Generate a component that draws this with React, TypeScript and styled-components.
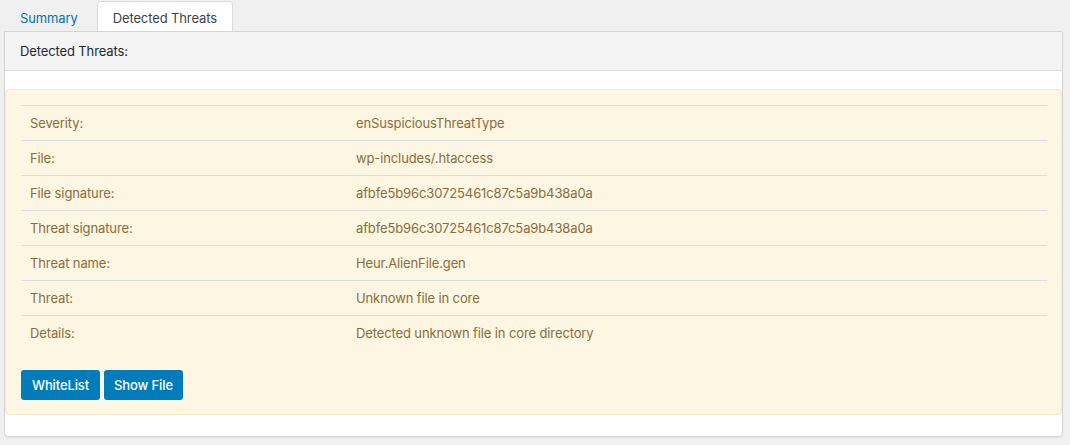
import React from "react";
import styled, { createGlobalStyle } from "styled-components";

const Global = createGlobalStyle`
  html, body { margin: 0; padding: 0; background: #f0f0f0; }
  body { font-family: Inter, "Liberation Sans", Arial, sans-serif; font-size: 13px; letter-spacing: -0.12px; }
`;

const Page = styled.div`
  padding: 1px 7px 8px 4px;
`;

const TabBar = styled.div`
  display: flex;
  align-items: flex-end;
  height: 30px;
  gap: 3px;
`;

const Tab = styled.div<{ $active?: boolean }>`
  height: 30px;
  box-sizing: border-box;
  padding: 3px 15px 0;
  display: flex;
  align-items: center;
  font-size: 13px;
  border: 1px solid ${(p) => (p.$active ? "#dcdcde" : "transparent")};
  border-bottom: none;
  border-radius: 4px 4px 0 0;
  background: ${(p) => (p.$active ? "#fff" : "transparent")};
  color: ${(p) => (p.$active ? "#3c434a" : "#0073aa")};
`;

const Panel = styled.div`
  border: 1px solid #d4d4d4;
  border-radius: 0 2px 4px 4px;
  background: #fff;
  box-shadow: 0 1px 1px rgba(0, 0, 0, 0.06);
`;

const PanelHeader = styled.div`
  height: 38px;
  background: #f4f4f4;
  border-bottom: 1px solid #dcdcdc;
  display: flex;
  align-items: center;
  padding-left: 15px;
  color: #23282d;
  font-size: 13px;
`;

const PanelBody = styled.div`
  padding: 18px 0 21px;
`;

const Alert = styled.div`
  background: #fcf6e2;
  border: 1px solid #f7ebc8;
  border-radius: 4px;
  padding: 15px 14px 14px 15px;
  color: #8a6d3b;
`;

const Table = styled.div`
  display: flex;
  flex-direction: column;
`;

const Row = styled.div`
  display: grid;
  grid-template-columns: 326px 1fr;
  height: 35px;
  align-items: center;
  border-top: 1px solid #dddddd;
  box-sizing: border-box;
`;

const Cell = styled.div`
  padding-left: 9px;
  font-size: 13px;
`;

const Actions = styled.div`
  display: flex;
  gap: 4px;
  margin-top: 20px;
`;

const Button = styled.button`
  width: 79px;
  height: 30px;
  border: none;
  border-radius: 3px;
  background: #007cba;
  color: #fff;
  font-family: Inter, "Liberation Sans", Arial, sans-serif;
  font-size: 13px;
  font-weight: 500;
  letter-spacing: -0.12px;
  padding: 0;
  cursor: pointer;
`;

const rows: [string, string][] = [
  ["Severity:", "enSuspiciousThreatType"],
  ["File:", "wp-includes/.htaccess"],
  ["File signature:", "afbfe5b96c30725461c87c5a9b438a0a"],
  ["Threat signature:", "afbfe5b96c30725461c87c5a9b438a0a"],
  ["Threat name:", "Heur.AlienFile.gen"],
  ["Threat:", "Unknown file in core"],
  ["Details:", "Detected unknown file in core directory"],
];

export default function App() {
  return (
    <>
      <Global />
      <Page>
        <TabBar>
          <Tab>Summary</Tab>
          <Tab $active>Detected Threats</Tab>
        </TabBar>
        <Panel>
          <PanelHeader>Detected Threats:</PanelHeader>
          <PanelBody>
            <Alert>
              <Table>
                {rows.map(([k, v]) => (
                  <Row key={k}>
                    <Cell>{k}</Cell>
                    <Cell>{v}</Cell>
                  </Row>
                ))}
              </Table>
              <Actions>
                <Button>WhiteList</Button>
                <Button>Show File</Button>
              </Actions>
            </Alert>
          </PanelBody>
        </Panel>
      </Page>
    </>
  );
}
